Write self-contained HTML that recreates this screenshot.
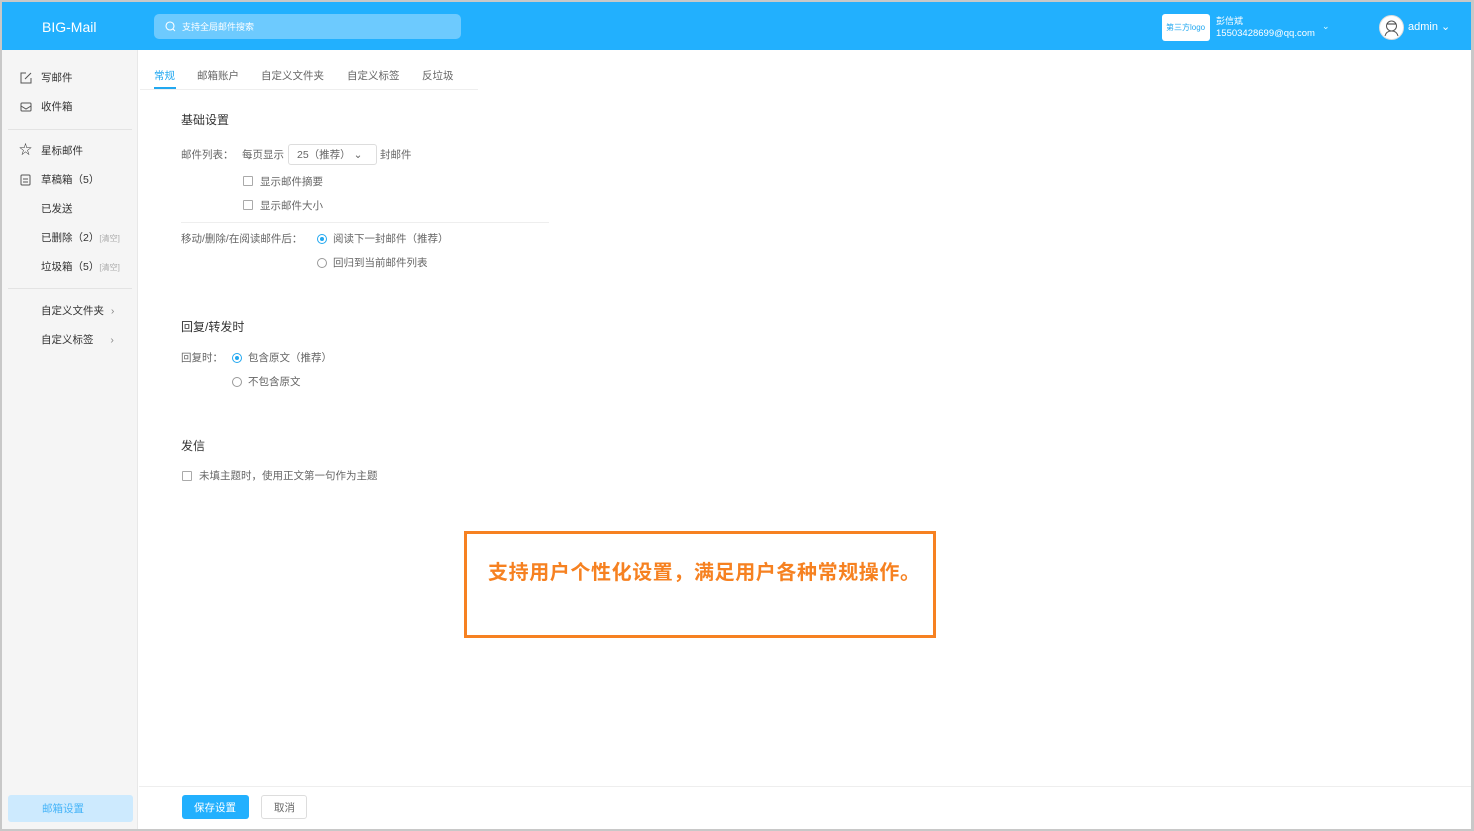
<!DOCTYPE html>
<html><head><meta charset="utf-8"><style>
*{margin:0;padding:0;box-sizing:border-box}
body{width:1474px;height:831px;background:#c8c8c8;font-family:"Liberation Sans","Noto Sans CJK SC",sans-serif;position:relative;overflow:hidden;color:#333}
.abs{position:absolute}
.page{position:absolute;left:2px;top:2px;width:1469px;height:827px;background:#fff}
.hdr{position:absolute;left:0;top:0;width:1469px;height:48px;background:#22b0fe}
.side{position:absolute;left:0;top:48px;width:136px;height:779px;background:#f5f5f5;border-right:1px solid #e8e8e8}
.t{position:absolute;font-size:10.5px;white-space:nowrap;line-height:12px}
.g{color:#666}
.cb{position:absolute;width:10px;height:10px;border:1px solid #aaa;border-radius:1px;background:#fff}
.rd{position:absolute;width:10px;height:10px;border:1px solid #999;border-radius:50%}
.rd.on{border-color:#22a8f0}
.rd.on:after{content:"";position:absolute;left:2px;top:2px;width:4px;height:4px;border-radius:50%;background:#22a8f0}
</style></head><body>
<div class="page">
<div class="hdr">
 <div class="t" style="left:40px;top:17px;font-size:14px;line-height:16px;color:#fff">BIG-Mail</div>
 <div class="abs" style="left:152px;top:12px;width:307px;height:25px;background:#6dcafe;border-radius:5px"></div>
 <svg class="abs" style="left:163px;top:19px" width="11" height="11"><circle cx="5" cy="5" r="4" fill="none" stroke="#fff" stroke-width="1.1"/><line x1="8" y1="8" x2="10" y2="10" stroke="#fff"/></svg>
 <div class="t" style="left:180px;top:19px;font-size:9px;color:#fff">支持全局邮件搜索</div>
 <div class="abs" style="left:1160px;top:12px;width:48px;height:27px;background:#fff;border-radius:3px"></div>
 <div class="t" style="left:1164px;top:20px;font-size:8px;color:#22a8f0">第三方logo</div>
 <div class="t" style="left:1214px;top:13px;font-size:9px;color:#fff">彭信斌</div>
 <div class="t" style="left:1214px;top:26px;font-size:9.5px;color:#fff">15503428699@qq.com</div>
 <div class="t" style="left:1320px;top:18px;font-size:9px;color:#dff">⌄</div>
 <div class="abs" style="left:1377px;top:13px;width:25px;height:25px;border-radius:50%;background:#fff;border:1px solid #ddd"></div>
 <svg class="abs" style="left:1380px;top:16px" width="19" height="19"><circle cx="9.5" cy="8" r="5" fill="none" stroke="#555"/><path d="M3 18c1-4 4-5 6.5-5s5.5 1 6.5 5" fill="none" stroke="#555"/><path d="M5 6h9" stroke="#333"/></svg>
 <div class="t" style="left:1406px;top:19px;font-size:11px;color:#fff">admin ⌄</div>
</div>
<div class="side">
 <svg class="abs" style="left:18px;top:22px" width="12" height="12"><path d="M6 1H1v10h10V6M5 7l6-6" fill="none" stroke="#555"/></svg>
 <div class="t" style="left:39px;top:22px">写邮件</div>
 <svg class="abs" style="left:18px;top:51px" width="12" height="12"><rect x="1" y="2" width="10" height="8" rx="1" fill="none" stroke="#555"/><path d="M1 5l5 3 5-3" fill="none" stroke="#555"/></svg>
 <div class="t" style="left:39px;top:51px">收件箱</div>
 <div class="abs" style="left:6px;top:79px;width:124px;height:1px;background:#e3e3e3"></div>
 <div class="t" style="left:17px;top:94px;font-size:13px">☆</div>
 <div class="t" style="left:39px;top:95px">星标邮件</div>
 <svg class="abs" style="left:18px;top:124px" width="12" height="12"><rect x="1" y="1" width="9" height="10" rx="1" fill="none" stroke="#555"/><path d="M3 5h5M3 8h5" stroke="#555"/></svg>
 <div class="t" style="left:39px;top:124px">草稿箱（5）</div>
 <div class="t" style="left:39px;top:153px">已发送</div>
 <div class="t" style="left:39px;top:182px">已删除（2）<span style="font-size:8px;color:#aaa">[清空]</span></div>
 <div class="t" style="left:39px;top:211px">垃圾箱（5）<span style="font-size:8px;color:#aaa">[清空]</span></div>
 <div class="abs" style="left:6px;top:238px;width:124px;height:1px;background:#e3e3e3"></div>
 <div class="t" style="left:39px;top:255px">自定义文件夹 <span style="color:#888;margin-left:4px">›</span></div>
 <div class="t" style="left:39px;top:284px">自定义标签 <span style="color:#888;margin-left:14px">›</span></div>
 <div class="abs" style="left:6px;top:745px;width:125px;height:27px;background:#cdeafe;border-radius:3px"></div>
 <div class="t" style="left:40px;top:753px;color:#46b4f8">邮箱设置</div>
</div>
<div class="t" style="left:152px;top:68px;color:#22a8f0">常规</div>
<div class="abs" style="left:152px;top:85px;width:22px;height:2px;background:#22a8f0"></div>
<div class="t g" style="left:195px;top:68px">邮箱账户</div>
<div class="t g" style="left:259px;top:68px">自定义文件夹</div>
<div class="t g" style="left:345px;top:68px">自定义标签</div>
<div class="t g" style="left:420px;top:68px">反垃圾</div>
<div class="abs" style="left:138px;top:87px;width:338px;height:1px;background:#eee"></div>
<div class="t" style="left:179px;top:111px;font-size:12px;line-height:14px">基础设置</div>
<div class="t g" style="left:179px;top:147px">邮件列表：</div>
<div class="t g" style="left:240px;top:147px">每页显示</div>
<div class="abs" style="left:286px;top:142px;width:89px;height:21px;border:1px solid #ddd;border-radius:3px"></div>
<div class="t g" style="left:295px;top:147px">25（推荐） ⌄</div>
<div class="t g" style="left:378px;top:147px">封邮件</div>
<div class="cb" style="left:241px;top:174px"></div><div class="t g" style="left:258px;top:174px">显示邮件摘要</div>
<div class="cb" style="left:241px;top:198px"></div><div class="t g" style="left:258px;top:198px">显示邮件大小</div>
<div class="abs" style="left:179px;top:220px;width:368px;height:1px;background:#eee"></div>
<div class="t g" style="left:179px;top:231px">移动/删除/在阅读邮件后：</div>
<div class="rd on" style="left:315px;top:232px"></div><div class="t g" style="left:331px;top:231px">阅读下一封邮件（推荐）</div>
<div class="rd" style="left:315px;top:256px"></div><div class="t g" style="left:331px;top:255px">回归到当前邮件列表</div>
<div class="t" style="left:179px;top:318px;font-size:12px;line-height:14px">回复/转发时</div>
<div class="t g" style="left:179px;top:350px">回复时：</div>
<div class="rd on" style="left:230px;top:351px"></div><div class="t g" style="left:246px;top:350px">包含原文（推荐）</div>
<div class="rd" style="left:230px;top:375px"></div><div class="t g" style="left:246px;top:374px">不包含原文</div>
<div class="t" style="left:179px;top:437px;font-size:12px;line-height:14px">发信</div>
<div class="cb" style="left:180px;top:469px"></div><div class="t g" style="left:197px;top:468px">未填主题时，使用正文第一句作为主题</div>
<div class="abs" style="left:462px;top:529px;width:472px;height:107px;border:3px solid #f68121"></div>
<div class="t" style="left:486px;top:559px;font-size:20px;line-height:24px;color:#f68121;font-weight:bold;letter-spacing:0.6px">支持用户个性化设置，满足用户各种常规操作。</div>
<div class="abs" style="left:137px;top:784px;width:1332px;height:1px;background:#eee"></div>
<div class="abs" style="left:180px;top:793px;width:67px;height:24px;background:#22b0fe;border-radius:3px"></div>
<div class="t" style="left:192px;top:800px;color:#fff">保存设置</div>
<div class="abs" style="left:259px;top:793px;width:46px;height:24px;border:1px solid #ddd;border-radius:3px"></div>
<div class="t g" style="left:272px;top:800px">取消</div>
</div>
</body></html>
